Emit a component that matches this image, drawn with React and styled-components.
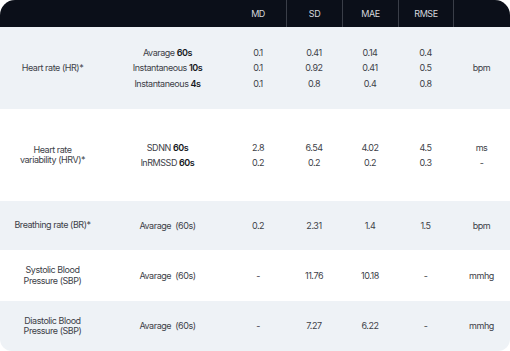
import React from 'react'
import styled, { createGlobalStyle } from 'styled-components'

const Global = createGlobalStyle`
  html, body { margin: 0; padding: 0; background: #ffffff; }
  body { font-family: Inter, "Noto Sans", sans-serif; }
`

const COLS = '105px 125px 56px 56px 56px 55px 57px'

const Table = styled.div`
  width: 510px;
  height: 351px;
  border-radius: 15px 15px 12px 12px;
  overflow: hidden;
  font-size: 9px;
  letter-spacing: -0.45px;
  color: #3d4148;
`

const HeadRow = styled.div`
  display: grid;
  grid-template-columns: ${COLS};
  height: 27px;
  background: #0b0f19;
  color: #d4d7dd;
`

const HeadCell = styled.div`
  display: flex;
  align-items: center;
  justify-content: center;
  border-left: ${p => (p.$line ? '1px solid #3a3e48' : 'none')};
`

const Row = styled.div`
  display: grid;
  grid-template-columns: ${COLS};
  height: ${p => p.$h}px;
  background: ${p => (p.$shade ? '#eef2f6' : '#ffffff')};
`

const Cell = styled.div`
  display: flex;
  flex-direction: column;
  align-items: center;
  justify-content: center;
  text-align: center;
  line-height: ${p => (p.$tight ? '10.5px' : '15.5px')};
`

const Bold = styled.b`
  font-weight: 600;
  color: #15181d;
`

const heads = ['', '', 'MD', 'SD', 'MAE', 'RMSE', '']

const rows = [
  {
    h: 82,
    shade: true,
    label: ['Heart rate (HR)*'],
    methods: [['Avarage ', '60s'], ['Instantaneous ', '10s'], ['Instantaneous ', '4s']],
    md: ['0.1', '0.1', '0.1'],
    sd: ['0.41', '0.92', '0.8'],
    mae: ['0.14', '0.41', '0.4'],
    rmse: ['0.4', '0.5', '0.8'],
    unit: ['bpm'],
  },
  {
    h: 92,
    label: ['Heart rate', 'variability (HRV)*'],
    methods: [['SDNN ', '60s'], ['lnRMSSD ', '60s']],
    md: ['2.8', '0.2'],
    sd: ['6.54', '0.2'],
    mae: ['4.02', '0.2'],
    rmse: ['4.5', '0.3'],
    unit: ['ms', '-'],
  },
  {
    h: 49,
    shade: true,
    label: ['Breathing rate (BR)*'],
    methods: [['Avarage  (60s)']],
    md: ['0.2'],
    sd: ['2.31'],
    mae: ['1.4'],
    rmse: ['1.5'],
    unit: ['bpm'],
  },
  {
    h: 51,
    label: ['Systolic Blood', 'Pressure (SBP)'],
    methods: [['Avarage  (60s)']],
    md: ['-'],
    sd: ['11.76'],
    mae: ['10.18'],
    rmse: ['-'],
    unit: ['mmhg'],
  },
  {
    h: 50,
    shade: true,
    label: ['Diastolic Blood', 'Pressure (SBP)'],
    methods: [['Avarage  (60s)']],
    md: ['-'],
    sd: ['7.27'],
    mae: ['6.22'],
    rmse: ['-'],
    unit: ['mmhg'],
  },
]

const Lines = ({ items }) => items.map((t, i) => <span key={i}>{t}</span>)

export default function App() {
  return (
    <>
      <Global />
      <Table>
        <HeadRow>
          {heads.map((h, i) => (
            <HeadCell key={i} $line={i > 2}>{h}</HeadCell>
          ))}
        </HeadRow>
        {rows.map((r, i) => (
          <Row key={i} $h={r.h} $shade={r.shade}>
            <Cell $tight><Lines items={r.label} /></Cell>
            <Cell>
              {r.methods.map((m, j) => (
                <span key={j} style={{ whiteSpace: 'pre' }}>
                  {m[0]}{m[1] && <Bold>{m[1]}</Bold>}
                </span>
              ))}
            </Cell>
            <Cell><Lines items={r.md} /></Cell>
            <Cell><Lines items={r.sd} /></Cell>
            <Cell><Lines items={r.mae} /></Cell>
            <Cell><Lines items={r.rmse} /></Cell>
            <Cell><Lines items={r.unit} /></Cell>
          </Row>
        ))}
      </Table>
    </>
  )
}
